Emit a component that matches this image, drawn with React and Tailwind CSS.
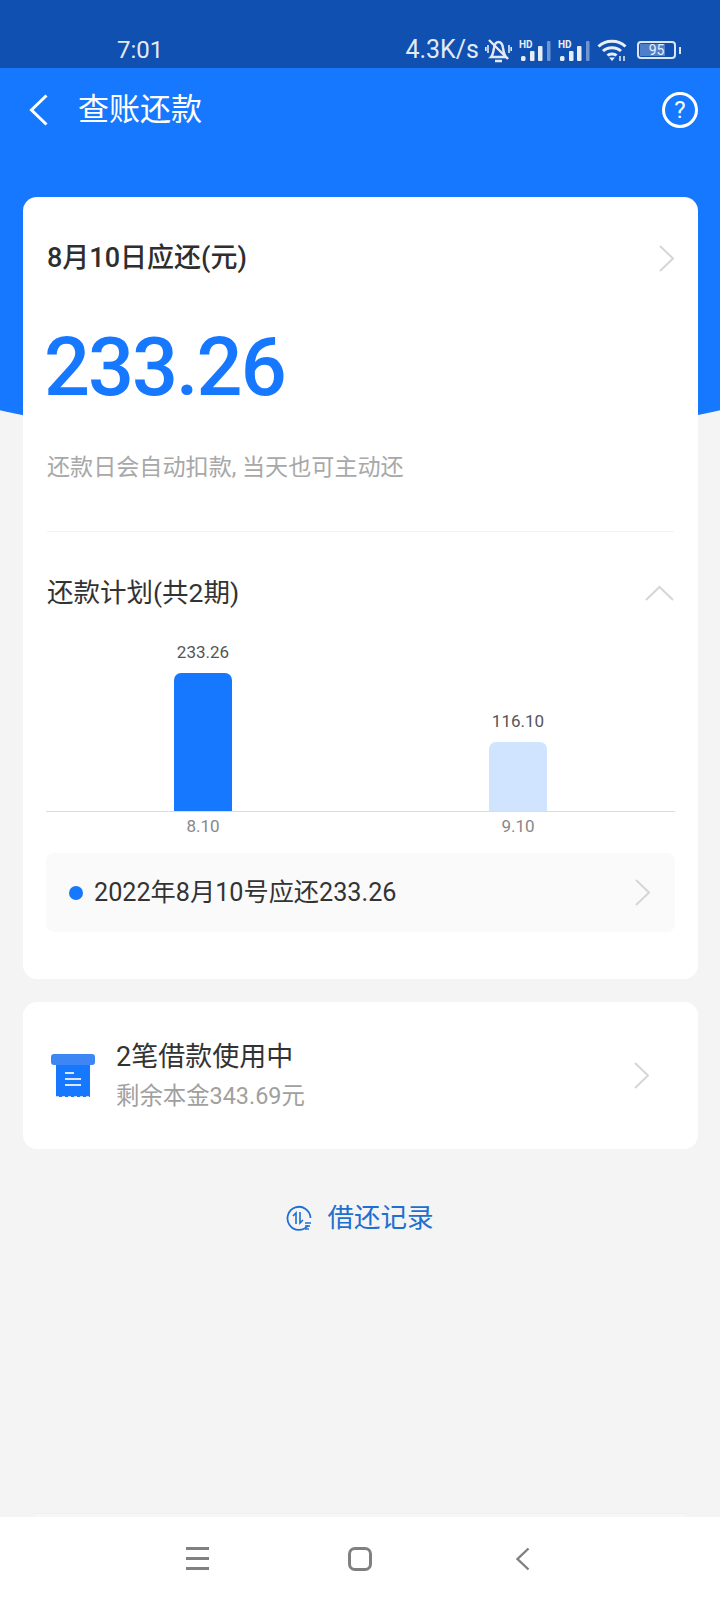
import React from 'react';

const font = { fontFamily: 'Roboto, "Noto Sans CJK SC", sans-serif' };

const Chevron = ({ className = '' }) => (
  <svg viewBox="0 0 15 27" className={`w-[15px] h-[27px] ${className}`} fill="none" stroke="#d6d6d6" strokeWidth="2">
    <path d="M1 1l13 12.5L1 26" />
  </svg>
);

const Signal = () => (
  <div className="relative w-[32px] h-[21px]">
    <span className="absolute left-0 top-0 text-[10px] leading-[9px] font-bold text-[#e8eef8]">HD</span>
    <svg viewBox="0 0 32 21" className="absolute inset-0 w-[32px] h-[21px]" fill="#e8eef8">
      <rect x="2" y="16" width="4.500" height="5" rx="1.500" />
      <rect x="11" y="11" width="4.500" height="10" rx="1" />
      <rect x="19" y="6" width="4.500" height="15" rx="1" />
      <rect x="28" y="1" width="3.500" height="20" rx="1" fill="#6f95d2" />
    </svg>
  </div>
);

const StatusBar = () => (
  <div className="h-[68px] bg-[#1050b0] pt-[36px] text-[#e3eaf6] shrink-0">
    <div className="h-[28px] flex items-center">
      <span className="ml-[117px] text-[24px] leading-[28px]">7:01</span>
      <span className="ml-auto text-[25px] leading-[28px]">4.3K/s</span>
      <svg viewBox="0 0 27 26" className="w-[27px] h-[26px] ml-[6px]" fill="none" stroke="#e3eaf6" strokeWidth="2.400">
        <path d="M6 20c2-2 2.500-6 3-9 .5-3.500 2-6 4.500-6s4 2.500 4.500 6c.5 3 1 7 3 9z" />
        <path d="M10 24h7M4 3l19 19" />
        <path d="M3 8v8M.8 10v4M24 8v8M26.200 10v4" strokeWidth="1.600" />
      </svg>
      <div className="ml-[7px] flex gap-[7px]">
        <Signal />
        <Signal />
      </div>
      <svg viewBox="0 0 30 22" className="w-[30px] h-[22px] ml-[7px]" fill="none" stroke="#e8eef8" strokeWidth="3">
        <path d="M1.500 7.500c7-7 20-7 27 0M6 12c4.500-4.500 13.500-4.500 18 0M10.500 16.500c2-2 7-2 9 0" />
        <path d="M15 22l-3-3.500h6z" fill="#e8eef8" stroke="none" />
        <path d="M23 17v5M27 17v5" strokeWidth="1.500" />
      </svg>
      <div className="ml-[10px] mr-[39px] flex items-center">
        <div className="w-[39px] h-[18px] border-2 border-[#dbe5f5] rounded-[4px] p-[1px] relative">
          <div className="w-[25px] h-full bg-[#4f7fc8]" />
          <span className="absolute inset-0 flex items-center justify-center text-[14px] leading-none text-[#e8eef8]">95</span>
        </div>
        <div className="w-[2px] h-[7px] bg-[#dbe5f5] ml-[3px]" />
      </div>
    </div>
  </div>
);

const Bar = ({ value, height, color }) => (
  <div className="w-[120px] flex flex-col items-center">
    <span className="text-[17px] leading-[20px] text-[#555] mb-[11px]">{value}</span>
    <div className={`w-[58px] rounded-t-[7px] ${color}`} style={{ height }} />
  </div>
);

export default function App() {
  return (
    <div className="w-[720px] h-[1600px] bg-[#f4f4f4] flex flex-col overflow-hidden" style={font}>
      <StatusBar />

      {/* Blue header with curved bottom */}
      <div className="relative h-[376px] overflow-hidden shrink-0">
        <div className="absolute top-0 left-[-140px] w-[1000px] h-[376px] bg-[#1677ff] rounded-b-[500px_110px]" />
        <div className="relative flex items-center h-[84px] pl-[29px] pr-[22px] text-white">
          <svg viewBox="0 0 19 32" className="w-[19px] h-[32px]" fill="none" stroke="#fff" strokeWidth="3">
            <path d="M17.500 1.500L2.500 16l15 14.500" />
          </svg>
          <span className="ml-[30px] text-[31px] leading-[40px]">查账还款</span>
          <div className="ml-auto w-[36px] h-[36px] rounded-full border-[3px] border-white flex items-center justify-center text-[24px] leading-none">?</div>
        </div>
      </div>

      <div className="relative mt-[-247px] pl-[23px] pr-[22px]">
        {/* Repayment card */}
        <div className="bg-white rounded-[14px] px-[24px] h-[782px] flex flex-col">
          <div className="flex items-center justify-between mt-[44px] h-[34px]">
            <span className="text-[27px] leading-[34px] font-medium text-[#2e2e2e]">8月10日应还(元)</span>
            <Chevron />
          </div>
          <div className="mt-[43px] -ml-[3px] text-[81px] leading-[100px] font-medium tracking-[-2px] text-[#1677ff]">233.26</div>
          <div className="mt-[35px] text-[23.100px] leading-[30px] text-[#a8a8a8]">还款日会自动扣款, 当天也可主动还</div>
          <div className="mt-[48px] h-px bg-[#f3f3f3]" />
          <div className="flex items-center justify-between mt-[44px] h-[34px]">
            <span className="text-[26.500px] leading-[34px] text-[#333]">还款计划(共2期)</span>
            <svg viewBox="0 0 29 16" className="w-[29px] h-[16px]" fill="none" stroke="#d6d6d6" strokeWidth="2">
              <path d="M1 15L14.500 2 28 15" />
            </svg>
          </div>

          {/* Chart */}
          <div className="flex items-end h-[202px] border-b border-[#dcdcdc] pl-[97px] -mx-px">
            <Bar value="233.26" height={138} color="bg-[#1677ff]" />
            <div className="w-[195px]" />
            <Bar value="116.10" height={69} color="bg-[#d1e4ff]" />
          </div>
          <div className="flex pl-[96px] h-[30px] items-center text-[17px] text-[#888]">
            <span className="w-[120px] text-center">8.10</span>
            <span className="w-[195px]" />
            <span className="w-[120px] text-center">9.10</span>
          </div>

          <div className="mt-[11px] -mx-px h-[79px] bg-[#fafafa] rounded-[8px] flex items-center pl-[23px] pr-[25px]">
            <span className="w-[14px] h-[14px] rounded-full bg-[#1677ff]" />
            <span className="ml-[11px] text-[25.200px] leading-[32px] text-[#333]">2022年8月10号应还233.26</span>
            <Chevron className="ml-auto" />
          </div>
        </div>

        {/* Loans card */}
        <div className="mt-[23px] bg-white rounded-[14px] h-[147px] flex items-center pl-[28px] pr-[49px]">
          <svg viewBox="0 0 44 44" className="w-[44px] h-[44px]">
            <rect x="5" y="2" width="34" height="41" fill="#1677ff" />
            <rect x="0" y="0" width="44" height="11" rx="3" fill="#3f86f5" />
            <path d="M14 19h9M14 25h16M14 31h16" stroke="#d8e8ff" strokeWidth="2" />
            <path d="M5 43h34" stroke="#fff" strokeWidth="1.500" strokeDasharray="3 3" />
          </svg>
          <div className="ml-[21px] flex flex-col">
            <span className="text-[27px] leading-[34px] text-[#333]">2笔借款使用中</span>
            <span className="mt-[7px] text-[23.400px] leading-[30px] text-[#a0a0a0]">剩余本金343.69元</span>
          </div>
          <Chevron className="ml-auto" />
        </div>

        {/* Records link */}
        <div className="mt-[51px] flex items-center justify-center pr-[2px]">
          <svg viewBox="0 0 26 26" className="w-[26px] h-[26px]" fill="none" stroke="#1f6fd6" strokeWidth="1.800">
            <path d="M22 20.500A11.500 11.500 0 1 1 24.500 13" />
            <path d="M10 19V8l-3 3M14 7v11l3-3" strokeWidth="1.600" />
            <path d="M19 18h6M19 21h5M19 24h4" strokeWidth="1.400" />
          </svg>
          <span className="ml-[16px] text-[26.500px] leading-[36px] text-[#2070d0]">借还记录</span>
        </div>
      </div>

      {/* Navigation bar */}
      <div className="mt-auto shrink-0">
        <div className="mx-[35px] h-[4px] bg-[#f7f7f7] border-t border-[#f0f0f0]" />
        <div className="h-[83px] bg-white flex items-center">
          <div className="ml-[186px] w-[23px] flex flex-col gap-[7px]">
            <span className="h-[3px] bg-[#808080]" />
            <span className="h-[3px] bg-[#808080]" />
            <span className="h-[3px] bg-[#808080]" />
          </div>
          <div className="ml-[139px] w-[24px] h-[24px] rounded-[7px] border-[3px] border-[#808080]" />
          <svg viewBox="0 0 15 24" className="ml-[143px] w-[15px] h-[24px]" fill="none" stroke="#808080" strokeWidth="2.400">
            <path d="M13.500 1.500L2.500 12l11 10.500" />
          </svg>
        </div>
      </div>
    </div>
  );
}
